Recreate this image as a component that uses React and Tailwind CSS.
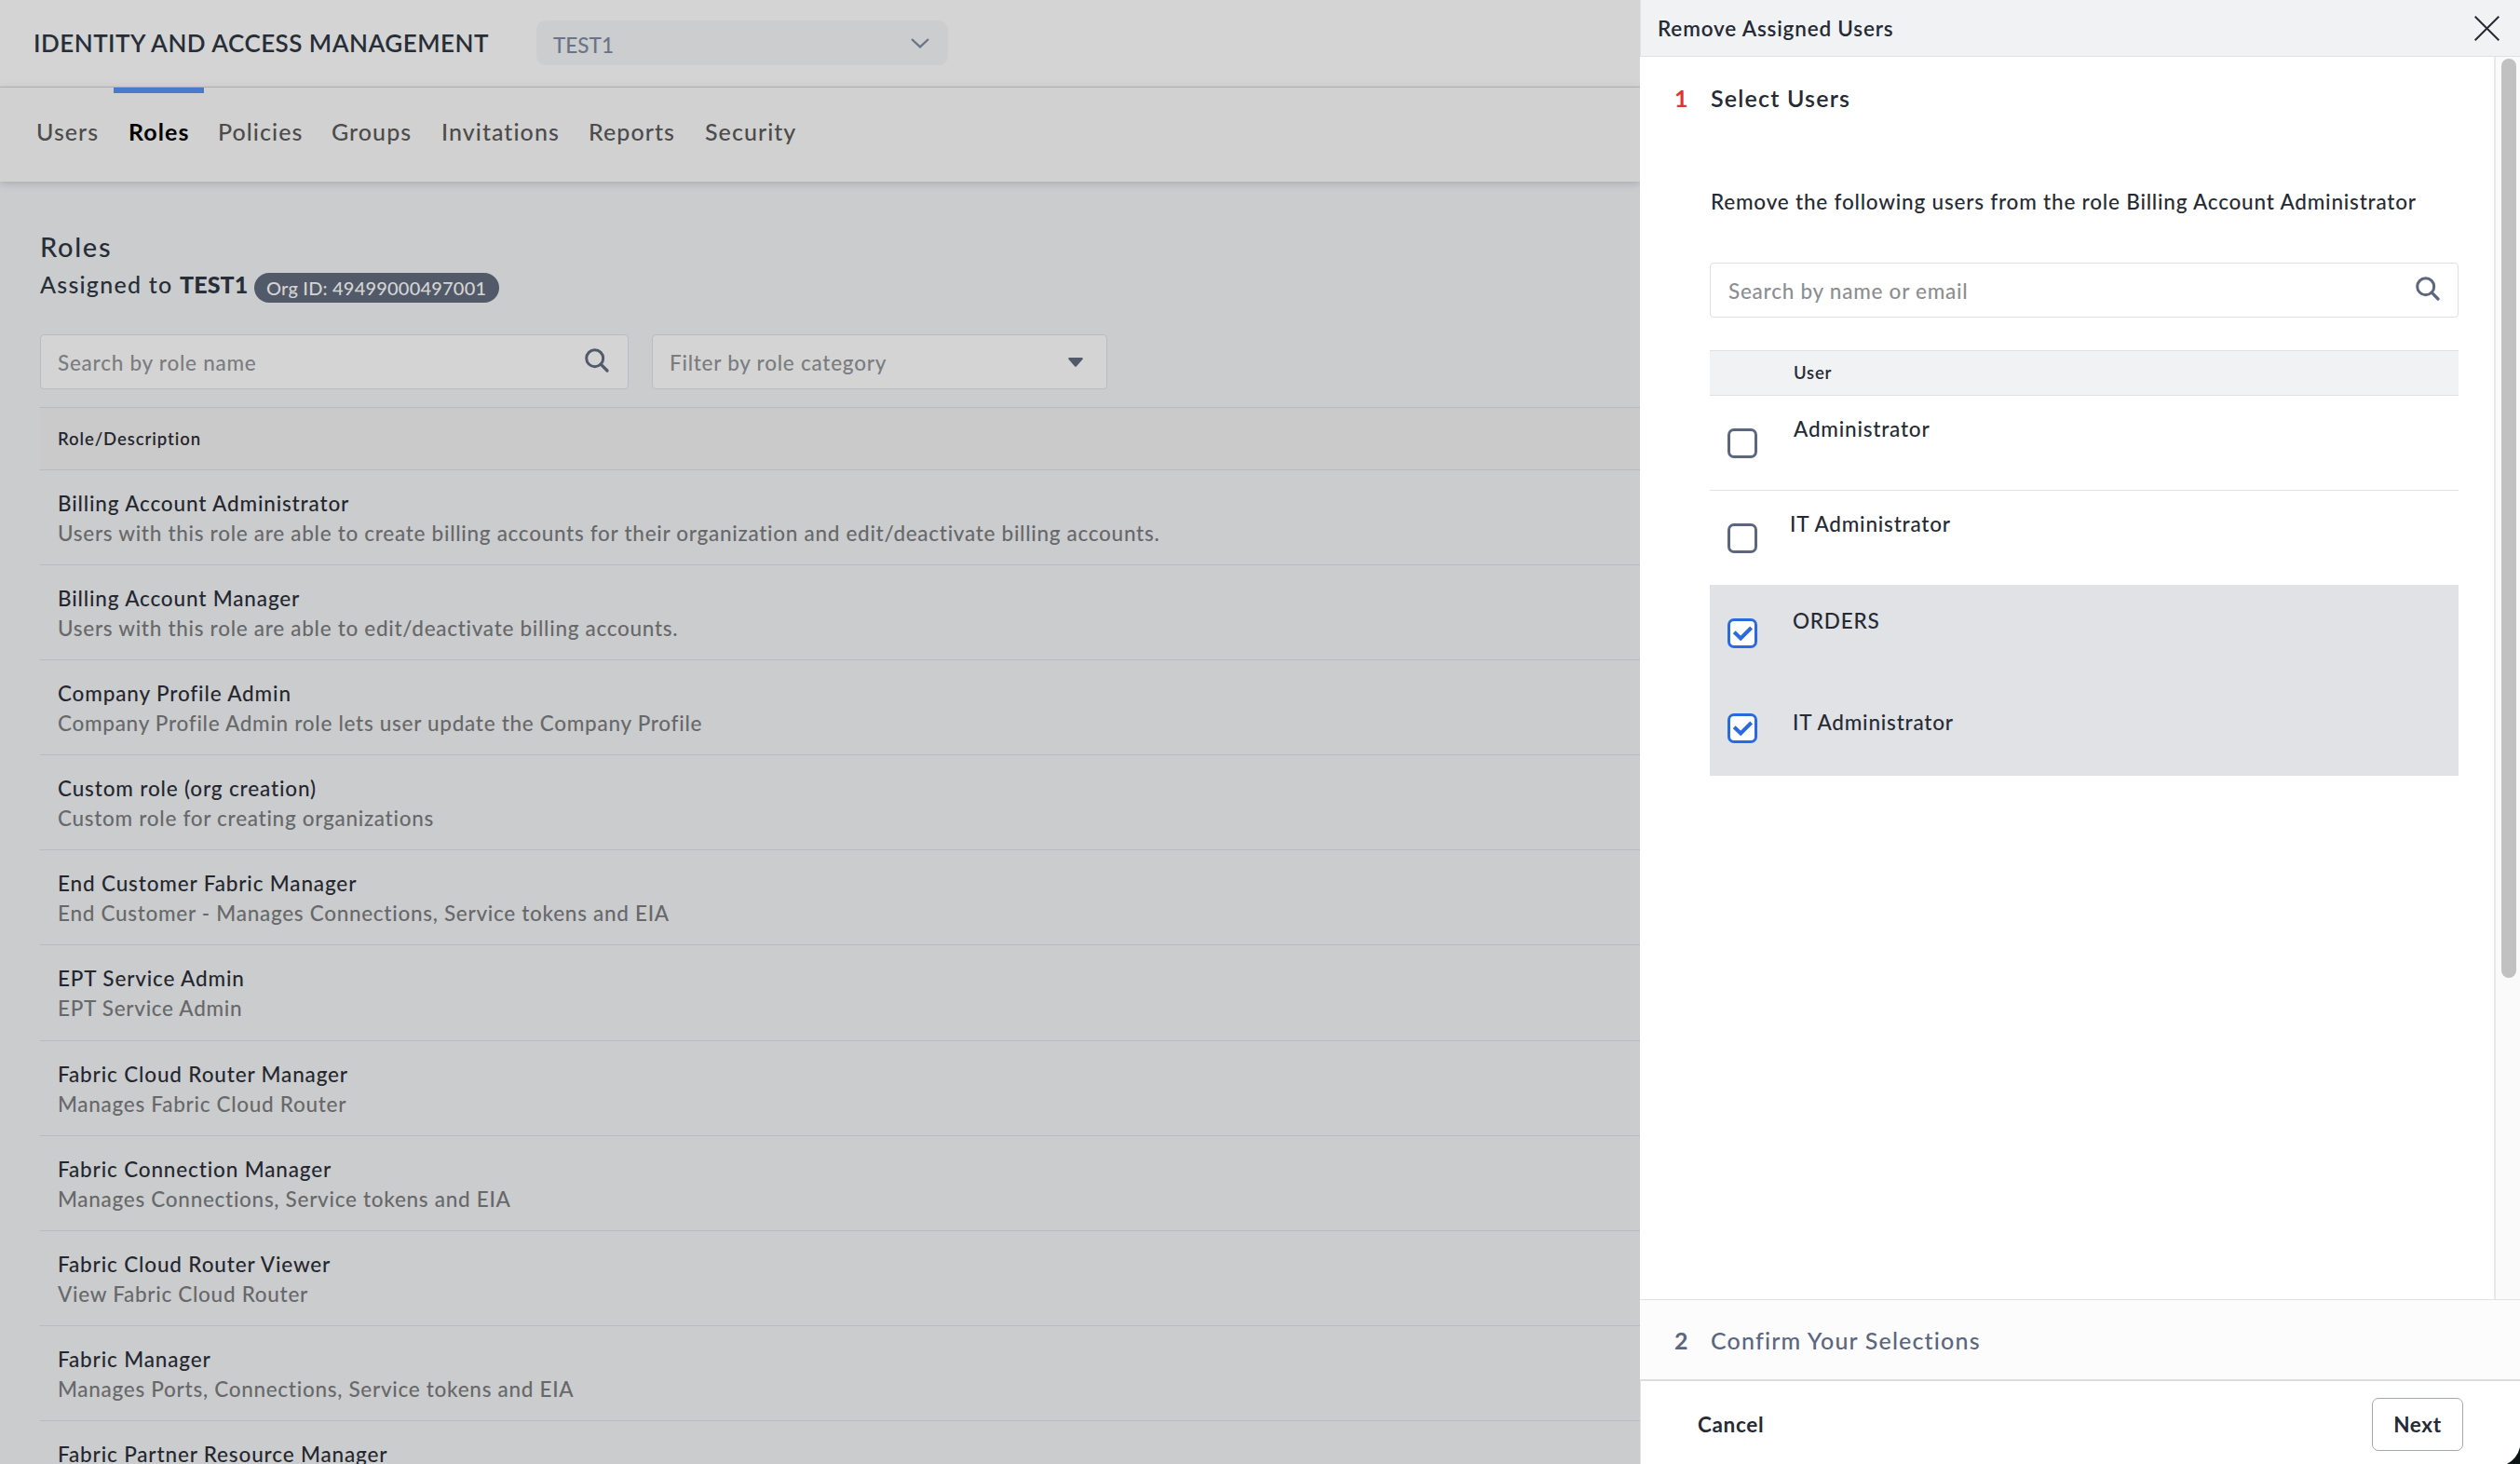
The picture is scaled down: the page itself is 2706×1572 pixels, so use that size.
import { useState } from 'react';

const tabs = [
  { label: 'Users', width: 'w-[98px]' },
  { label: 'Roles', width: 'w-[97px]' },
  { label: 'Policies', width: 'w-[122px]' },
  { label: 'Groups', width: 'w-[118px]' },
  { label: 'Invitations', width: 'w-[158px]' },
  { label: 'Reports', width: 'w-[125px]' },
  { label: 'Security', width: 'w-[130px]' },
];

const roles = [
  ['Billing Account Administrator', 'Users with this role are able to create billing accounts for their organization and edit/deactivate billing accounts.'],
  ['Billing Account Manager', 'Users with this role are able to edit/deactivate billing accounts.'],
  ['Company Profile Admin', 'Company Profile Admin role lets user update the Company Profile'],
  ['Custom role (org creation)', 'Custom role for creating organizations'],
  ['End Customer Fabric Manager', 'End Customer - Manages Connections, Service tokens and EIA'],
  ['EPT Service Admin', 'EPT Service Admin'],
  ['Fabric Cloud Router Manager', 'Manages Fabric Cloud Router'],
  ['Fabric Connection Manager', 'Manages Connections, Service tokens and EIA'],
  ['Fabric Cloud Router Viewer', 'View Fabric Cloud Router'],
  ['Fabric Manager', 'Manages Ports, Connections, Service tokens and EIA'],
  ['Fabric Partner Resource Manager', ''],
];

const initialUsers = [
  { id: 1, name: 'Administrator', checked: false, pad: 'pt-[20px] pl-[39px]' },
  { id: 2, name: 'IT Administrator', checked: false, pad: 'pt-[20px] pl-[35px]' },
  { id: 3, name: 'ORDERS', checked: true, pad: 'pt-[22px] pl-[38px]' },
  { id: 4, name: 'IT Administrator', checked: true, pad: 'pt-[29px] pl-[38px]' },
];

function SearchIcon({ className }) {
  return (
    <svg className={className} viewBox="0 0 26 26" fill="none" stroke="currentColor">
      <circle cx="10.7" cy="10.7" r="9" strokeWidth="3" />
      <path d="M17.2 17.2L24 24" strokeWidth="3.2" strokeLinecap="round" />
    </svg>
  );
}

function Checkbox({ checked, onChange }) {
  return (
    <button
      type="button"
      role="checkbox"
      aria-checked={checked}
      onClick={onChange}
      className={`w-8 h-8 shrink-0 rounded-[7px] border-[3px] bg-white flex items-center justify-center ${checked ? 'border-[#2b69e0]' : 'border-[#5c667f]'}`}
    >
      {checked && (
        <svg className="w-[26px] h-[26px] shrink-0" viewBox="0 0 26 26" fill="none" stroke="#2b69e0" strokeWidth="4">
          <path d="M4.2 11.8L11.2 18.4L22.6 7" />
        </svg>
      )}
    </button>
  );
}

function Header() {
  return (
    <header className="h-[94px] shrink-0 flex items-start border-b border-[#b4b5b6] bg-[#d4d4d4]">
      <h1 className="w-[576px] pl-[36px] pt-[30px] text-[26px] leading-8 font-semibold tracking-[0.48px] text-[#272e37]">
        IDENTITY AND ACCESS MANAGEMENT
      </h1>
      <div className="w-[442px] h-12 mt-[22px] pl-[18px] pr-[20px] flex justify-between rounded-[10px] bg-[#cbcdcf] text-[#6a7486]">
        <span className="pt-[11px] text-[22.5px] leading-8 font-medium">TEST1</span>
        <svg className="w-5 h-[11px] mt-[19px]" viewBox="0 0 20 11" fill="none" stroke="currentColor" strokeWidth="2.2">
          <path d="M1 1L10 9.4L19 1" />
        </svg>
      </div>
    </header>
  );
}

function Nav() {
  return (
    <nav className="relative h-[101px] shrink-0 pl-6 flex bg-[#d1d1d1] shadow-[0_2px_8px_rgba(120,120,135,0.4)]">
      {tabs.map(({ label, width }) => (
        <a
          key={label}
          className={`${width} pt-[25px] border-t-[6px] text-[25px] leading-8 ${label === 'Roles' ? 'pl-[16px] border-[#4a7acb] font-bold tracking-[1.1px] text-black' : 'pl-[15px] border-transparent font-medium tracking-[1.05px] text-[#4c4c4c]'}`}
        >
          {label}
        </a>
      ))}
    </nav>
  );
}

function RolesPage() {
  return (
    <main className="flex-1 pl-[43px] pt-[54px]">
      <h2 className="text-[29px] leading-8 font-medium tracking-[1.7px] text-[#272e37]">Roles</h2>
      <div className="h-12 flex items-center text-[25px] tracking-[1.25px] text-[#272e37] whitespace-pre">
        <span className="w-[150px] pt-[2px] font-medium">Assigned to</span>
        <span className="w-[80px] pt-[2px] font-black tracking-[0.1px]">TEST1</span>
        <span className="w-[263px] h-8 mt-[7px] pl-[13px] flex items-center rounded-full bg-[#525a6a] text-[20px] font-medium tracking-[0.2px] text-[#d4d4d4]">
          Org ID: 49499000497001
        </span>
      </div>

      <div className="mt-[30px] flex gap-[25px] text-[22.5px] font-medium tracking-[0.75px] text-[#7b7c7f]">
        <div className="w-[632px] h-[59px] pl-[18px] pr-[20px] flex items-center justify-between rounded border border-[#babcbf] bg-[#d4d4d4]">
          <span className="pt-[2px]">Search by role name</span>
          <SearchIcon className="w-[26px] h-[26px] mb-1 text-[#525a6a]" />
        </div>
        <div className="w-[489px] h-[59px] pl-[18px] pr-[25px] flex items-center justify-between rounded border border-[#babcbf] bg-[#d4d4d4]">
          <span className="pt-[2px]">Filter by role category</span>
          <svg className="w-4 h-[10px]" viewBox="0 0 16 10" fill="#525a6a">
            <path d="M1.5 0H14.5Q16.5 0.3 15.4 2L9 9.2Q8 10.3 7 9.2L0.6 2Q-0.5 0.3 1.5 0Z" />
          </svg>
        </div>
      </div>

      <div className="mt-[19px] h-[68px] pl-[19px] pt-[2px] flex items-center border-y border-[#b9bbbe] bg-[#cacaca] text-[18.5px] font-semibold tracking-[0.92px] text-[#25272f]">
        Role/Description
      </div>
      {roles.map(([name, description]) => (
        <div key={name} className="h-[102.1px] pt-[20px] pl-[19px] border-b border-[#b9bbbe] text-[22.5px] leading-8 whitespace-nowrap">
          <div className="font-medium tracking-[0.85px] text-[#25272f]">{name}</div>
          <div className="font-medium tracking-[0.71px] text-[#67686a]">{description}</div>
        </div>
      ))}
    </main>
  );
}

function Drawer() {
  const [users, setUsers] = useState(initialUsers);
  const toggle = (id) => setUsers(users.map((u) => (u.id === id ? { ...u, checked: !u.checked } : u)));

  return (
    <aside className="relative w-[945px] h-full shrink-0 flex flex-col bg-white text-[22.5px] text-[#252a35]">
      <div className="h-[61px] shrink-0 pl-[18px] pr-[22px] flex items-center justify-between border-b border-l border-[#dfe0e4] bg-[#f1f2f4]">
        <span className="pt-[1px] font-semibold tracking-[0.82px]">Remove Assigned Users</span>
        <svg className="w-[27px] h-[27px]" viewBox="0 0 27 27" stroke="#252a35" strokeWidth="2">
          <path d="M0.7 0.7L26.3 26.3M26.3 0.7L0.7 26.3" />
        </svg>
      </div>

      <div className="flex-1 min-h-0 flex">
        <div className="flex-1 pl-[37px] pr-[38px] pt-[28px]">
          <div className="flex text-[25px] leading-8 font-semibold">
            <span className="w-[39px] font-bold text-[#e0352f]">1</span>
            <span className="tracking-[1.2px]">Select Users</span>
          </div>
          <div className="pl-[38px]">
            <p className="mt-[80px] leading-8 font-medium tracking-[0.8px] pl-[1px] whitespace-nowrap">
              Remove the following users from the role Billing Account Administrator
            </p>
            <div className="mt-[49px] h-[59px] pl-[19px] pr-[19px] flex items-center justify-between rounded border border-[#dfe0e4] font-medium tracking-[0.75px] text-[#8c8e92]">
              <span className="pt-[2px]">Search by name or email</span>
              <SearchIcon className="w-[26px] h-[26px] mb-[3px] text-[#5c667f]" />
            </div>

            <div className="mt-[35px] h-[49px] pl-[90px] pt-[1px] flex items-center border-y border-[#dfe0e4] bg-[#f1f2f4] text-[18.5px] font-semibold tracking-[0.8px]">
              User
            </div>
            {users.map(({ id, name, checked, pad }) => (
              <div
                key={id}
                className={`h-[102px] pl-[19px] flex items-start ${checked ? 'bg-[#e1e2e6]' : 'border-b border-[#e1e2e6]'}`}
              >
                <div className="pt-[35px]">
                  <Checkbox checked={checked} onChange={() => toggle(id)} />
                </div>
                <span className={`${pad} leading-8 font-medium tracking-[0.8px]`}>{name}</span>
              </div>
            ))}
          </div>
        </div>
        <div className="w-[28px] pt-[2px] pl-[6px] border-l-2 border-[#e8e8e8] bg-[#fafafa]">
          <div className="w-4 h-[987px] rounded-full bg-[#c1c1c1]" />
        </div>
      </div>

      <div className="h-[88px] shrink-0 pl-[37px] pt-[2px] flex items-center border-t border-b-2 border-t-[#e2e2e3] border-b-[#dddddd] bg-[#fcfcfc] text-[25px] text-[#5c667f]">
        <span className="w-[39px] font-bold">2</span>
        <span className="font-medium tracking-[1.17px]">Confirm Your Selections</span>
      </div>

      <div className="h-[89px] shrink-0 pl-[61px] pr-[61px] pt-[4px] flex items-center justify-between border-l border-[#e2e2e3] font-bold tracking-[0.65px]">
        <button type="button">Cancel</button>
        <button type="button" className="w-[98px] h-[57px] rounded-[7px] border border-[#a3a6b7]">Next</button>
      </div>

      <svg className="absolute right-0 bottom-0 w-[14px] h-[18px]" viewBox="0 0 14 18" fill="#0b1513">
        <path d="M14 0Q11 12 0 18H14Z" />
      </svg>
    </aside>
  );
}

export default function App() {
  return (
    <div className="flex w-[2706px] h-[1572px] overflow-hidden bg-[#cbccce] font-['Lato','Liberation_Sans',sans-serif]">
      <div className="flex-1 min-w-0 h-full flex flex-col overflow-hidden">
        <Header />
        <Nav />
        <RolesPage />
      </div>
      <Drawer />
    </div>
  );
}
